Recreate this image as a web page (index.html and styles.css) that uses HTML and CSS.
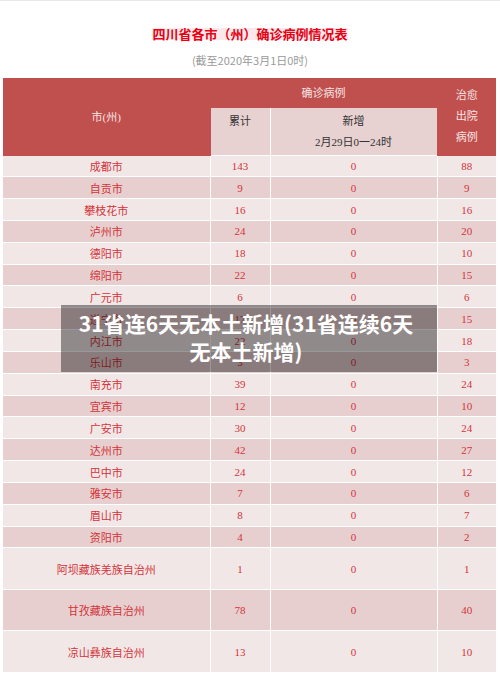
FILE: index.html
```html
<!DOCTYPE html>
<html lang="zh-CN">
<head>
    <meta charset="UTF-8">
    <meta name="viewport" content="width=device-width, initial-scale=1.0">
    <title>四川省各市（州）确诊病例情况表</title>
    <link rel="stylesheet" href="styles.css">
</head>
<body>
    <div class="head">
        <div class="title"><span>四川省各市（州）确诊病例情况表</span></div>
        <div class="sub">(截至2020年3月1日0时)</div>
    </div>

    <div class="wrap">
        <table class="tb">
            <colgroup>
                <col class="c1"><col class="c2"><col class="c3"><col class="c4">
            </colgroup>
            <thead>
                <tr class="h1">
                    <th rowspan="2" class="red">市(州)</th>
                    <th colspan="2" class="red">确诊病例</th>
                    <th rowspan="2" class="red multi">治愈<br>出院<br>病例</th>
                </tr>
                <tr class="h2">
                    <th class="pink">累计</th>
                    <th class="pink">新增<br>2月29日0一24时</th>
                </tr>
            </thead>
            <tbody>
                <tr><td>成都市</td><td>143</td><td>0</td><td>88</td></tr>
                <tr><td>自贡市</td><td>9</td><td>0</td><td>9</td></tr>
                <tr><td>攀枝花市</td><td>16</td><td>0</td><td>16</td></tr>
                <tr><td>泸州市</td><td>24</td><td>0</td><td>20</td></tr>
                <tr><td>德阳市</td><td>18</td><td>0</td><td>10</td></tr>
                <tr><td>绵阳市</td><td>22</td><td>0</td><td>15</td></tr>
                <tr><td>广元市</td><td>6</td><td>0</td><td>6</td></tr>
                <tr><td>遂宁市</td><td>17</td><td>0</td><td>15</td></tr>
                <tr><td>内江市</td><td>22</td><td>0</td><td>18</td></tr>
                <tr><td>乐山市</td><td>3</td><td>0</td><td>3</td></tr>
                <tr><td>南充市</td><td>39</td><td>0</td><td>24</td></tr>
                <tr><td>宜宾市</td><td>12</td><td>0</td><td>10</td></tr>
                <tr><td>广安市</td><td>30</td><td>0</td><td>24</td></tr>
                <tr><td>达州市</td><td>42</td><td>0</td><td>27</td></tr>
                <tr><td>巴中市</td><td>24</td><td>0</td><td>12</td></tr>
                <tr><td>雅安市</td><td>7</td><td>0</td><td>6</td></tr>
                <tr><td>眉山市</td><td>8</td><td>0</td><td>7</td></tr>
                <tr><td>资阳市</td><td>4</td><td>0</td><td>2</td></tr>
                <tr class="tall"><td>阿坝藏族羌族自治州</td><td>1</td><td>0</td><td>1</td></tr>
                <tr class="tall"><td>甘孜藏族自治州</td><td>78</td><td>0</td><td>40</td></tr>
                <tr class="tall"><td>凉山彝族自治州</td><td>13</td><td>0</td><td>10</td></tr>
            </tbody>
        </table>

        <div class="caption">31省连6天无本土新增(31省连续6天<br>无本土新增)</div>
    </div>
</body>
</html>
```

FILE: styles.css
```css
body {
    margin: 0;
    background: #fff;
    font-family: "Liberation Serif", "Noto Sans CJK SC", serif;
}
.head {
    height: 78px;
    box-sizing: border-box;
    border-top: 1px solid #e8e8e8;
    padding-top: 19px;
    text-align: center;
    font-family: "Noto Sans CJK SC", sans-serif;
}
.title span {
    display: inline-block;
    font-size: 13px;
    line-height: 12px;
    font-weight: bold;
    color: #e50014;
    background: #fde9eb;
}
.sub {
    margin-top: 9px;
    font-size: 11px;
    line-height: 14px;
    color: #9a9a9a;
}
.wrap {
    position: relative;
    margin: 0 4px 0 3px;
}
.tb {
    width: 100%;
    border-collapse: collapse;
    table-layout: fixed;
    font-size: 11px;
    text-align: center;
}
.c1 { width: 207px; }
.c2 { width: 60px; }
.c3 { width: 167px; }
.c4 { width: 59px; }
.tb th, .tb td {
    border: 1px solid #fff;
    padding: 0;
    font-weight: normal;
}
.tb thead tr:first-child th {
    border-top: none;
}
.tb th:first-child, .tb td:first-child {
    border-left: none;
}
.tb th:last-child, .tb td:last-child {
    border-right: none;
}
.h1 { height: 29px; }
.h2 { height: 48px; }
.red {
    background: #c0504d;
    color: #f6e4e4;
    border-color: #c0504d !important;
}
.multi {
    line-height: 21px;
}
.pink {
    background: #e7d1d1;
    color: #333;
    vertical-align: top;
    line-height: 21px;
    padding-top: 3px !important;
}
.tb tbody tr {
    height: 21.83px;
    color: #d2343a;
}
.tb tbody tr:nth-child(odd) td {
    background: #f2e7e7;
}
.tb tbody tr:nth-child(even) td {
    background: #e7cfcf;
}
.tb tbody tr.tall {
    height: 41.5px;
}
.caption {
    position: absolute;
    left: 58px;
    top: 227px;
    width: 376px;
    height: 67px;
    box-sizing: border-box;
    padding: 4px 6px 0 0;
    background: rgba(0, 0, 0, 0.4);
    color: #fff;
    font-family: "Noto Sans CJK SC", sans-serif;
    font-weight: bold;
    font-size: 21px;
    line-height: 28px;
    text-align: center;
    white-space: nowrap;
}
```
